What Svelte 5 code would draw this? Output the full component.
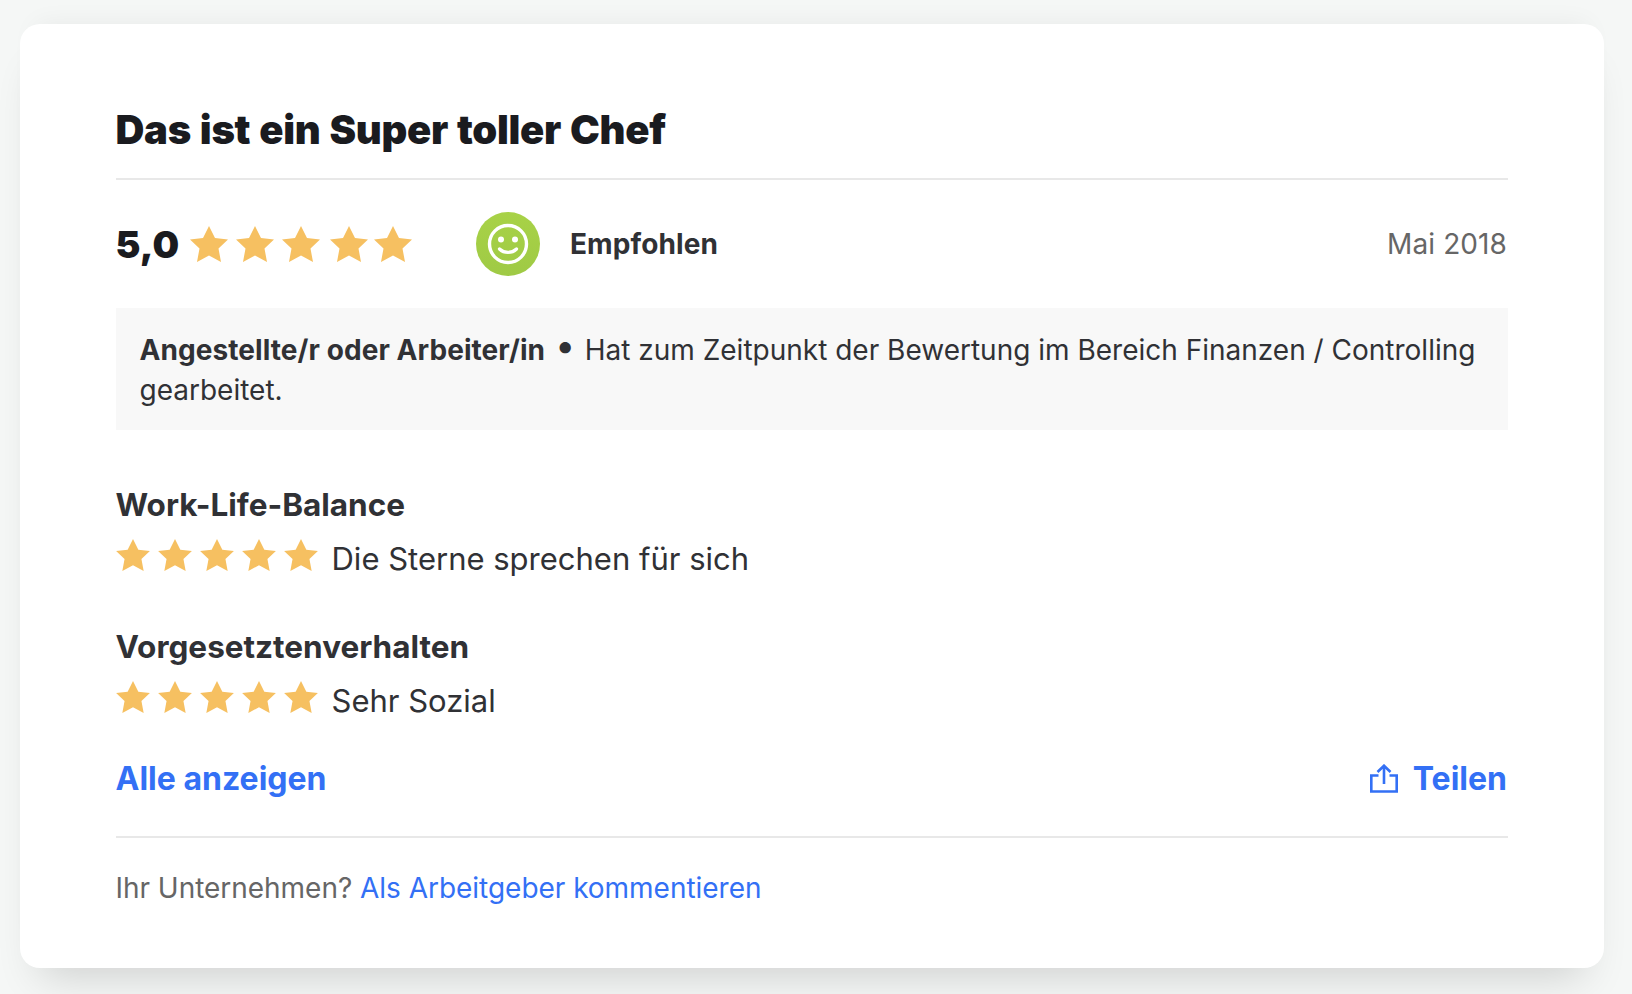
<script>
  const details = [
    { label: "Work-Life-Balance", comment: "Die Sterne sprechen für sich" },
    { label: "Vorgesetztenverhalten", comment: "Sehr Sozial" },
  ];
  const stars = [0, 1, 2, 3, 4];
</script>

{#snippet star(cls)}
  <svg class={cls} viewBox="0 0 38 36" aria-hidden="true">
    <path d="M19 0L25 12L38 13.500L28.500 22.500L31 36L19 29.500L7 36L9.500 22.500L0 13.500L13 12Z" />
  </svg>
{/snippet}

<main class="card">
  <h1>Das ist ein Super toller Chef</h1>

  <div class="summary">
    <div class="score">
      <span class="number">5,0</span>
      <div class="stars stars--large">
        {#each stars as i}
          {@render star("star star--large")}
        {/each}
      </div>
    </div>
    <div class="badge">
      <svg viewBox="0 0 64 64" width="64" height="64" aria-hidden="true">
        <defs>
          <linearGradient id="badge-green" x1="0" y1="0" x2="0" y2="1">
            <stop offset="0" stop-color="#a8d247" />
            <stop offset="1" stop-color="#9fca45" />
          </linearGradient>
        </defs>
        <circle cx="32" cy="32" r="32" fill="url(#badge-green)" />
        <circle cx="32" cy="32" r="18.500" fill="none" stroke="#fff" stroke-width="3.400" />
        <circle cx="25" cy="27.500" r="3" fill="#fff" />
        <circle cx="39" cy="27.500" r="3" fill="#fff" />
        <path d="M23.500 37c4.500 4.500 12.500 4.500 17 0" fill="none" stroke="#fff" stroke-width="3.200" stroke-linecap="round" />
      </svg>
      <span>Empfohlen</span>
    </div>
    <time>Mai 2018</time>
  </div>

  <p class="position">
    <strong>Angestellte/r oder Arbeiter/in</strong>
    <span class="dot">•</span>
    Hat zum Zeitpunkt der Bewertung im Bereich Finanzen / Controlling gearbeitet.
  </p>

  {#each details as item}
    <section class="detail">
      <h2>{item.label}</h2>
      <div class="detail__row">
        <div class="stars">
          {#each stars as i}
            {@render star("star")}
          {/each}
        </div>
        <span>{item.comment}</span>
      </div>
    </section>
  {/each}

  <div class="actions">
    <a href="#alle">Alle anzeigen</a>
    <a class="share" href="#teilen">
      <svg viewBox="0 0 28 29" width="28" height="29" aria-hidden="true">
        <path
          d="M8.500 11.500H1.300v16h25.400v-16H19.500M14 20V2M7.500 8L14 1.700 20.500 8"
          fill="none"
          stroke="currentColor"
          stroke-width="2.600"
        />
      </svg>
      Teilen
    </a>
  </div>

  <p class="employer">
    Ihr Unternehmen? <a href="#kommentieren">Als Arbeitgeber kommentieren</a>
  </p>
</main>

<style>
  :global(body) {
    margin: 0;
    background-color: #f5f7f6;
    font-family: Inter, "Liberation Sans", sans-serif;
    color: #303135;
  }

  .card {
    box-sizing: border-box;
    width: 1584px;
    height: 944px;
    margin: 24px 28px 26px 20px;
    padding: 81px 96px 0 95.500px;
    background-color: #fff;
    border-radius: 20px;
    box-shadow:
      0 28px 40px -20px rgba(0, 0, 0, 0.16),
      0 -16px 26px -16px rgba(0, 0, 0, 0.06);
  }

  h1 {
    margin: 0;
    padding-bottom: 23px;
    border-bottom: 2px solid #e8e8e8;
    font-size: 40px;
    font-weight: 900;
    letter-spacing: -0.3px;
    word-spacing: 1.300px;
    line-height: 50px;
    color: #1a1b1f;
  }

  .summary {
    display: flex;
    align-items: center;
    height: 64px;
    margin: 32px 0;
  }

  .score {
    display: flex;
    align-items: center;
    width: 360.500px;
  }

  .number {
    width: 74.500px;
    font-size: 37.500px;
    font-weight: 900;
    color: #1a1b1f;
  }

  .stars {
    display: flex;
    gap: 8px;
  }

  .detail__row .stars {
    margin-bottom: 8px;
    margin-left: 0.500px;
  }

  .star {
    display: block;
    width: 34px;
    height: 32px;
    fill: #f6c061;
  }

  .star--large {
    width: 38px;
    height: 36px;
  }

  /* the header stars are not quite evenly spaced */
  .star--large:nth-child(3) {
    margin-right: 2px;
  }

  .star--large:nth-child(4) {
    margin-right: -2px;
  }

  .badge {
    display: flex;
    align-items: center;
    gap: 30px;
    font-size: 28px;
    font-weight: 700;
    letter-spacing: 0.1px;
  }

  .badge svg {
    display: block;
  }

  time {
    margin-left: auto;
    padding-right: 1px;
    font-size: 28px;
    letter-spacing: 0.1px;
    color: #666;
  }

  .position {
    margin: 0 0 53px;
    padding: 22px 24px 20px;
    background-color: #f8f8f8;
    font-size: 28px;
    line-height: 40px;
  }

  .position strong {
    font-weight: 700;
    letter-spacing: 0.07px;
  }

  .dot {
    margin: 0 4.500px 0 5px;
    font-size: 36px;
    font-weight: 900;
    line-height: 0;
    vertical-align: 2px;
  }

  .detail + .detail {
    margin-top: 44px;
  }

  h2 {
    margin: 0 0 10px;
    font-size: 31.500px;
    font-weight: 700;
    line-height: 44px;
  }

  .detail__row {
    display: flex;
    align-items: center;
    gap: 13.500px;
    font-size: 31px;
    line-height: 44px;
  }

  .actions {
    display: flex;
    justify-content: space-between;
    align-items: center;
    height: 44px;
    margin-top: 33px;
    padding-bottom: 36px;
    border-bottom: 2px solid #e8e8e8;
    font-size: 32px;
    font-weight: 700;
  }

  a {
    color: #3370f5;
    text-decoration: none;
  }

  .share {
    display: flex;
    align-items: center;
    gap: 15px;
    padding-right: 1px;
  }

  .employer {
    margin: 30px 0 0;
    font-size: 28px;
    letter-spacing: -0.03px;
    line-height: 40px;
    color: #666;
  }
</style>
